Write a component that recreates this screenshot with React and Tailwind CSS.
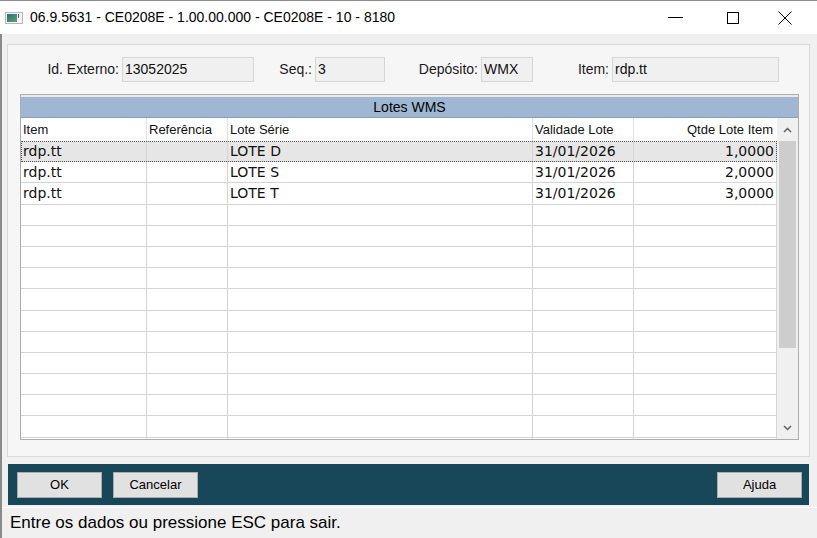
import { useState } from "react";

const cols = [
  { key: "item", label: "Item", w: "w-[126px]", align: "text-left" },
  { key: "ref", label: "Referência", w: "w-[81px]", align: "text-left" },
  { key: "lote", label: "Lote Série", w: "w-[305px]", align: "text-left" },
  { key: "val", label: "Validade Lote", w: "w-[101px]", align: "text-left" },
  { key: "qtd", label: "Qtde Lote Item", w: "w-[143px]", align: "text-right" },
];

const data = [
  { item: "rdp.tt", ref: "", lote: "LOTE D", val: "31/01/2026", qtd: "1,0000" },
  { item: "rdp.tt", ref: "", lote: "LOTE S", val: "31/01/2026", qtd: "2,0000" },
  { item: "rdp.tt", ref: "", lote: "LOTE T", val: "31/01/2026", qtd: "3,0000" },
];

const Field = ({ label, labelW, inputW, value }) => (
  <div className="flex items-center gap-[3px]">
    <span className={`${labelW} text-right text-[14px] text-[#1b1b1b]`}>{label}</span>
    <div className={`${inputW} h-[25px] bg-[#f0f0f0] border border-[#d6d6d6] flex items-center pl-[2px] text-[14px] text-[#111]`}>
      {value}
    </div>
  </div>
);

const Btn = ({ children }) => (
  <button className="w-[85px] h-[26px] bg-[#e1e1e1] border border-[#adadad] text-[13px] text-black flex items-center justify-center">
    {children}
  </button>
);

export default function App() {
  const [selected, setSelected] = useState(0);
  const rows = [...data, ...Array(12).fill(null)];

  return (
    <div className="w-[817px] h-[538px] overflow-hidden bg-[#f0f0f0] flex flex-col font-['Liberation_Sans',Arial,sans-serif] border-t border-[#8c8c8c]">
      {/* title bar */}
      <div className="h-[33px] bg-white flex items-center relative">
        <div className="ml-[5px] w-[18px] h-[12px] border border-[#b8b8b8] bg-[#f4f4f4] flex p-[1px] gap-[1px]">
          <div className="flex-1 bg-gradient-to-br from-[#2b6c7a] to-[#5fa36c]"></div>
          <div className="w-[3px] flex flex-col">
            <div className="h-[4px] w-[1px] bg-[#5b5b5b]"></div>
          </div>
        </div>
        <span className="ml-[7px] text-[14px] text-black">06.9.5631 - CE0208E - 1.00.00.000 - CE0208E - 10 - 8180</span>
        <div className="ml-auto flex items-center h-full">
          <div className="w-[58px] h-full flex items-center justify-center">
            <div className="w-[15px] h-[1px] bg-black"></div>
          </div>
          <div className="w-[58px] h-full flex items-center justify-center">
            <div className="w-[12px] h-[12px] border border-black"></div>
          </div>
          <div className="w-[46px] h-full flex items-center justify-center mr-[9px]">
            <svg width="14" height="14" viewBox="0 0 14 14">
              <path d="M0.5 0.5 L13.5 13.5 M13.5 0.5 L0.5 13.5" stroke="#000" strokeWidth="1" fill="none" />
            </svg>
          </div>
        </div>
      </div>

      {/* body */}
      <div className="flex-1 flex flex-col border-l-2 border-[#8a8a8a]">
        <div className="mt-[10px] ml-[5px] w-[803px] h-[413px] border border-[#d9d9d9] bg-[#f6f6f6] flex flex-col">
          <div className="mt-[12px] ml-[31px] flex items-center">
            <Field label="Id. Externo:" labelW="w-[80px]" inputW="w-[132px]" value="13052025" />
            <Field label="Seq.:" labelW="w-[58px]" inputW="w-[70px]" value="3" />
            <Field label="Depósito:" labelW="w-[93px]" inputW="w-[52px]" value="WMX" />
            <Field label="Item:" labelW="w-[76px]" inputW="w-[167px]" value="rdp.tt" />
          </div>

          {/* grid */}
          <div className="mt-[12px] ml-[12px] w-[779px] h-[346px] border border-[#adadad] bg-white flex flex-col">
            <div className="h-[2px] bg-[#e9e9e9]"></div>
            <div className="h-[21px] bg-[#9fb7d2] border-b border-[#8aa0ba] flex items-center justify-center text-[14px] text-black">
              Lotes WMS
            </div>
            <div className="flex flex-1 overflow-hidden">
              <div className="flex flex-col w-[756px]">
                <div className="h-[23px] flex shrink-0">
                  {cols.map((c) => (
                    <div
                      key={c.key}
                      className={`${c.w} ${c.align} h-full border-r border-[#e2e2e2] flex items-center text-[13px] text-[#111] px-[2px] ${c.key === "qtd" ? "justify-end pr-[4px] border-r-0" : ""}`}
                    >
                      {c.label}
                    </div>
                  ))}
                </div>
                <div className="flex flex-col overflow-hidden flex-1">
                  {rows.map((r, i) => (
                    <div
                      key={i}
                      onClick={() => r && setSelected(i)}
                      className={`h-[21.2px] shrink-0 flex relative ${selected === i ? "bg-[#e6e6e6]" : ""}`}
                    >
                      {cols.map((c) => (
                        <div
                          key={c.key}
                          className={`${c.w} h-full border-r border-b border-[#d4d4d4] flex items-center px-[2px] font-['DejaVu_Sans',sans-serif] text-[14px] text-[#111] ${c.key === "qtd" ? "justify-end" : ""}`}
                        >
                          {r ? r[c.key] : ""}
                        </div>
                      ))}
                      {selected === i && (
                        <div className="absolute inset-0 border border-dotted border-[#555]"></div>
                      )}
                    </div>
                  ))}
                </div>
              </div>
              {/* scrollbar */}
              <div className="w-[21px] bg-[#f0f0f0] flex flex-col items-center">
                <div className="h-[23px] w-full flex items-center justify-center">
                  <svg width="9" height="6" viewBox="0 0 9 6">
                    <path d="M1 5 L4.5 1.5 L8 5" stroke="#606060" strokeWidth="1.5" fill="none" />
                  </svg>
                </div>
                <div className="w-[17px] h-[207px] bg-[#cdcdcd]"></div>
                <div className="flex-1"></div>
                <div className="h-[22px] w-full flex items-center justify-center">
                  <svg width="9" height="6" viewBox="0 0 9 6">
                    <path d="M1 1 L4.5 4.5 L8 1" stroke="#606060" strokeWidth="1.5" fill="none" />
                  </svg>
                </div>
              </div>
            </div>
          </div>
        </div>

        {/* button bar */}
        <div className="mt-[7px] ml-[6px] w-[801px] h-[41px] bg-[#19475a] flex items-center px-[9px] gap-[11px]">
          <Btn>OK</Btn>
          <Btn>Cancelar</Btn>
          <div className="ml-auto -mr-[2px]">
            <Btn>Ajuda</Btn>
          </div>
        </div>

        {/* status bar */}
        <div className="mt-[2px] flex-1 border-t border-white flex items-center pl-[8px] text-[17px] text-black">
          Entre os dados ou pressione ESC para sair.
        </div>
      </div>
    </div>
  );
}
